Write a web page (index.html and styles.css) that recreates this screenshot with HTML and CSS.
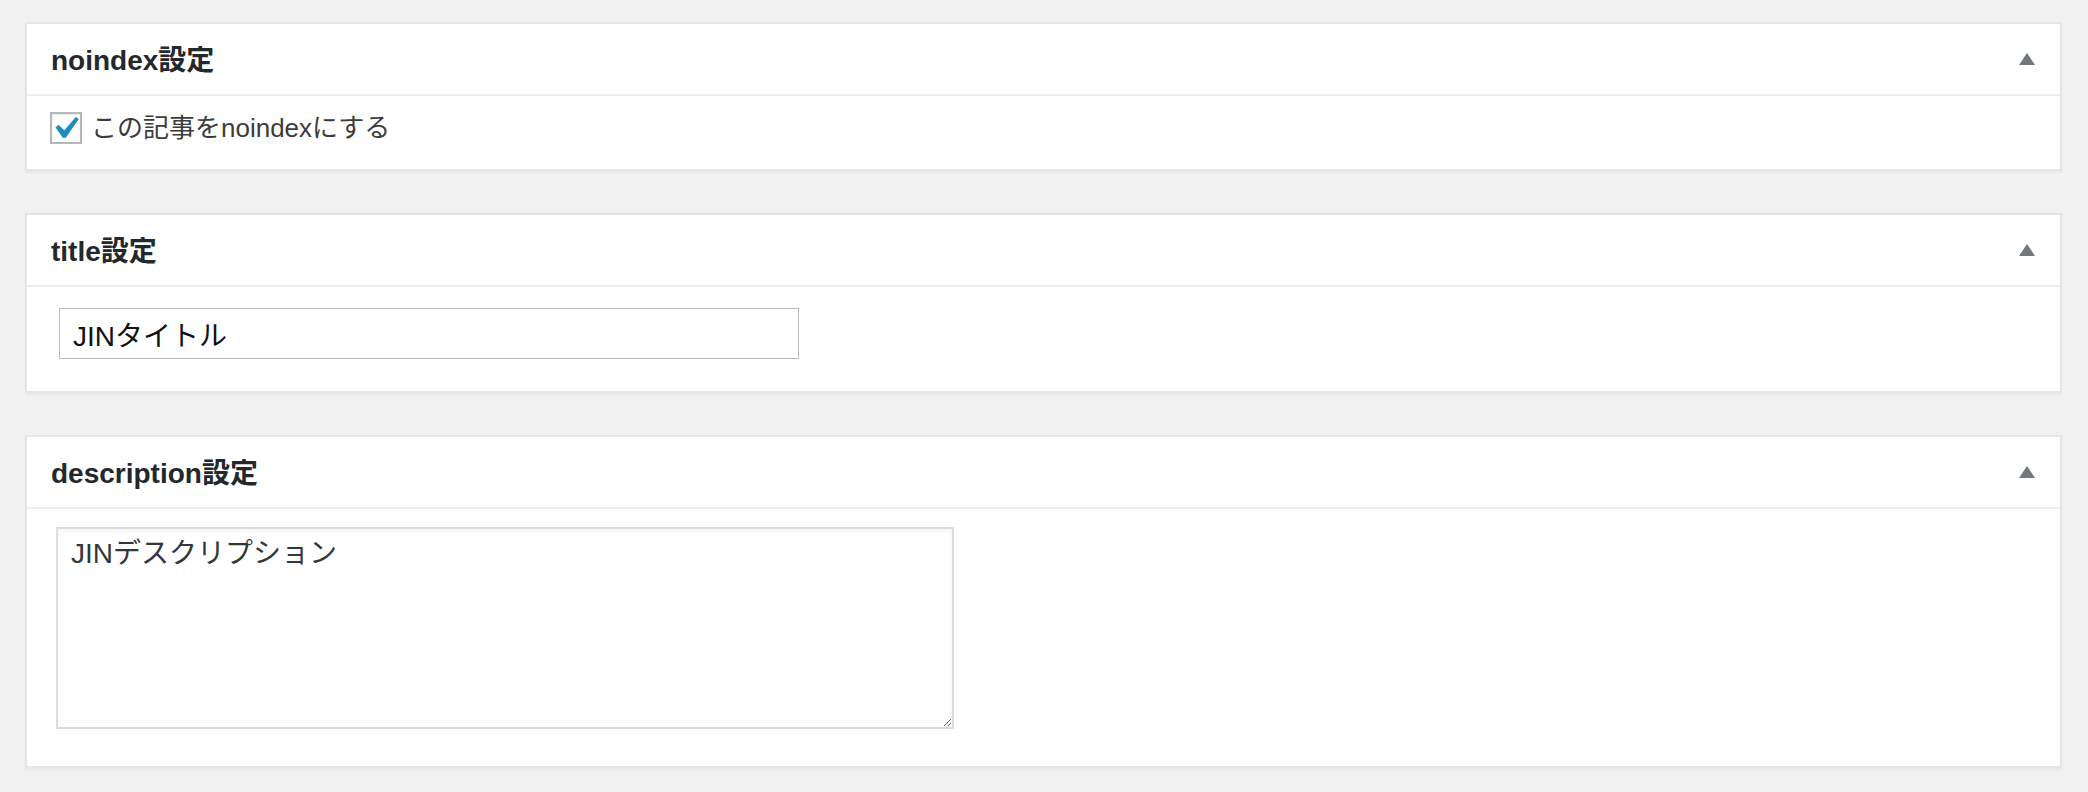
FILE: index.html
```html
<!DOCTYPE html>
<html lang="ja">
<head>
    <meta charset="UTF-8">
    <meta name="viewport" content="width=device-width, initial-scale=1.0">
    <title>SEO設定</title>
    <link rel="stylesheet" href="styles.css">
</head>
<body>
    <div class="wrap">
        <div class="postbox">
            <div class="postbox-header">
                <h2 class="hndle">noindex設定</h2>
                <span class="toggle-indicator"></span>
            </div>
            <div class="inside inside-check">
                <label class="check-row">
                    <span class="checkbox">
                        <svg width="28" height="28" viewBox="4.2 3.6 12.5 12.5"><path d="M14.83 4.89l1.34.94-5.81 8.38H9.02L5.78 9.67l1.34-1.25 2.57 2.4z" fill="#1e8cbe"/></svg>
                    </span>
                    この記事をnoindexにする
                </label>
            </div>
        </div>

        <div class="postbox">
            <div class="postbox-header">
                <h2 class="hndle">title設定</h2>
                <span class="toggle-indicator"></span>
            </div>
            <div class="inside inside-title">
                <input type="text" class="title-input" value="JINタイトル">
            </div>
        </div>

        <div class="postbox">
            <div class="postbox-header">
                <h2 class="hndle">description設定</h2>
                <span class="toggle-indicator"></span>
            </div>
            <div class="inside inside-desc">
                <textarea class="desc-input">JINデスクリプション</textarea>
            </div>
        </div>
    </div>
</body>
</html>
```

FILE: styles.css
```css
body {
    margin: 0;
    background-color: #f1f1f1;
    font-family: 'Liberation Sans', 'Noto Sans CJK JP', sans-serif;
    color: #444;
}
.wrap {
    padding: 22px 26px 0 25px;
}
.postbox {
    background-color: #fff;
    border: 2px solid #e5e5e5;
    box-shadow: 0 2px 2px rgba(0, 0, 0, 0.04);
    margin-bottom: 42px;
}
.postbox-header {
    display: flex;
    align-items: center;
    justify-content: space-between;
    border-bottom: 2px solid #eee;
    padding: 0 25px 0 24px;
    height: 70px;
}
.hndle {
    margin: 0;
    font-size: 28px;
    font-weight: bold;
    line-height: 38px;
    color: #23282d;
    padding-top: 4px;
}
.toggle-indicator {
    width: 0;
    height: 0;
    border-left: 8px solid transparent;
    border-right: 8px solid transparent;
    border-bottom: 12px solid #72777c;
}
.inside-check {
    padding: 16px 24px 25px 23px;
}
.check-row {
    display: flex;
    align-items: center;
    font-size: 26px;
    line-height: 32px;
    color: #3c3c3c;
}
.checkbox {
    display: flex;
    width: 28px;
    height: 28px;
    border: 2px solid #b4b9be;
    box-shadow: inset 0 1px 2px rgba(0, 0, 0, 0.1);
    margin-right: 9px;
}
.inside-title {
    padding: 21px 32px 32px;
}
.title-input {
    display: block;
    box-sizing: border-box;
    width: 740px;
    height: 51px;
    margin: 0;
    border: 1px solid #bbb;
    padding: 0 13px;
    font-family: 'Liberation Sans', 'Noto Sans CJK JP', sans-serif;
    font-size: 28px;
    color: #111;
    outline: none;
}
.inside-desc {
    padding: 18px 29px 37px;
}
.desc-input {
    display: block;
    box-sizing: border-box;
    width: 898px;
    height: 202px;
    margin: 0;
    border: 2px solid #ddd;
    box-shadow: inset 0 2px 4px rgba(0, 0, 0, 0.05);
    padding: 5px 13px;
    font-family: 'Liberation Sans', 'Noto Sans CJK JP', sans-serif;
    font-size: 28px;
    line-height: 1.4;
    color: #32373c;
    outline: none;
}
```
